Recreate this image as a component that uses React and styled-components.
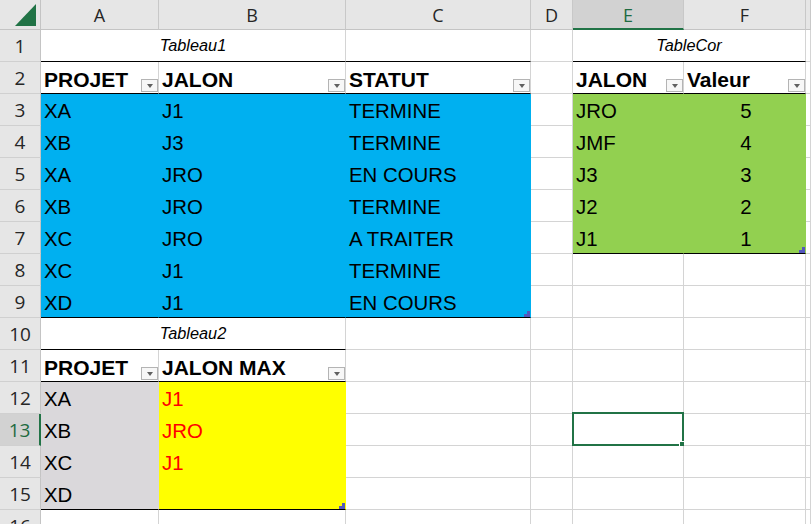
import React from 'react';
import styled, { createGlobalStyle } from 'styled-components';

const GlobalStyle = createGlobalStyle`
  html, body {
    margin: 0;
    padding: 0;
    background: #ffffff;
    overflow: hidden;
  }
`;

const BLUE = '#00b0f0';
const GREEN = '#92d050';
const YELLOW = '#ffff00';
const GRAY = '#dad8db';
const GRID = '#d4d4d4';
const XL_GREEN = '#217346';

const columns = ['A', 'B', 'C', 'D', 'E', 'F', ''];

const tableau1 = [
  ['XA', 'J1', 'TERMINE'],
  ['XB', 'J3', 'TERMINE'],
  ['XA', 'JRO', 'EN COURS'],
  ['XB', 'JRO', 'TERMINE'],
  ['XC', 'JRO', 'A TRAITER'],
  ['XC', 'J1', 'TERMINE'],
  ['XD', 'J1', 'EN COURS'],
];

const tableCor = [
  ['JRO', '5'],
  ['JMF', '4'],
  ['J3', '3'],
  ['J2', '2'],
  ['J1', '1'],
];

const tableau2 = [
  ['XA', 'J1'],
  ['XB', 'JRO'],
  ['XC', 'J1'],
  ['XD', ''],
];

const App = () => {
  return (
    <>
      <GlobalStyle />
      <Sheet>
        <Corner>
          <svg width="41" height="30" viewBox="0 0 41 30">
            <polygon points="36,4 36,26 15,26" fill={XL_GREEN} />
          </svg>
        </Corner>
        {columns.map((c, i) =>
          <ColHeader key={i} $selected={c === 'E'}>{c}</ColHeader>,
        )}

        {/* row 1 : titles */}
        <RowHeader>1</RowHeader>
        <Title $span={2} $line="#000">Tableau1</Title>
        <Cell $line="#000" />
        <Cell />
        <Title $span={2} $line="#000">TableCor</Title>
        <Cell />

        {/* row 2 : headers */}
        <RowHeader>2</RowHeader>
        <HeadCell label="PROJET" />
        <HeadCell label="JALON" />
        <HeadCell label="STATUT" />
        <Cell />
        <HeadCell label="JALON" />
        <HeadCell label="Valeur" />
        <Cell />

        {tableau1.map((row, i) => {
          const last = i === tableau1.length - 1;
          const cor = tableCor[i];
          const corLast = i === tableCor.length - 1;
          return (
            <React.Fragment key={i}>
              <RowHeader>{i + 3}</RowHeader>
              <Cell $fill={BLUE} $line={last ? '#000' : null}>{row[0]}</Cell>
              <Cell $fill={BLUE} $line={last ? '#000' : null}>{row[1]}</Cell>
              <Cell $fill={BLUE} $line={last ? '#000' : null}>
                {row[2]}
                {last && <ResizeMark />}
              </Cell>
              <Cell />
              {cor ? (
                <>
                  <Cell $fill={GREEN} $line={corLast ? '#000' : null}>{cor[0]}</Cell>
                  <Cell $fill={GREEN} $line={corLast ? '#000' : null} $align="center">
                    {cor[1]}
                    {corLast && <ResizeMark />}
                  </Cell>
                </>
              ) : (
                <>
                  <Cell />
                  <Cell />
                </>
              )}
              <Cell />
            </React.Fragment>
          );
        })}

        {/* row 10 */}
        <RowHeader>10</RowHeader>
        <Title $span={2} $line="#000">Tableau2</Title>
        <Cell />
        <Cell />
        <Cell />
        <Cell />
        <Cell />

        {/* row 11 */}
        <RowHeader>11</RowHeader>
        <HeadCell label="PROJET" />
        <HeadCell label="JALON MAX" />
        <Cell />
        <Cell />
        <Cell />
        <Cell />
        <Cell />

        {tableau2.map((row, i) => {
          const last = i === tableau2.length - 1;
          const n = i + 12;
          return (
            <React.Fragment key={i}>
              <RowHeader $selected={n === 13}>{n}</RowHeader>
              <Cell $fill={GRAY} $line={last ? '#000' : null}>{row[0]}</Cell>
              <Cell $fill={YELLOW} $line={last ? '#000' : null} $color="#ff0000">
                {row[1]}
                {last && <ResizeMark />}
              </Cell>
              <Cell />
              <Cell />
              <Cell>
                {n === 13 && (
                  <Selection>
                    <FillHandle />
                  </Selection>
                )}
              </Cell>
              <Cell />
              <Cell />
            </React.Fragment>
          );
        })}

        <RowHeader>16</RowHeader>
        {columns.map((c, i) => <Cell key={i} />)}
      </Sheet>
    </>
  );
};

const HeadCell = ({ label }) => (
  <Cell $bold $line="#000">
    {label}
    <DropButton />
  </Cell>
);

const ResizeMark = () => (
  <Mark width="6" height="6" viewBox="0 0 6 6">
    <path d="M3 0H6V6H0V3H3Z" fill="#5457bd" />
  </Mark>
);

const Sheet = styled.div`
  display: grid;
  grid-template-columns: 41px 118px 187px 185px 42px 111px 122px 1fr;
  grid-template-rows: 30px;
  grid-auto-rows: 32px;
  width: 811px;
  height: 524px;
  overflow: hidden;
  background: #ffffff;
`;

const Corner = styled.div`
  background: #e6e6e6;
  border-right: 1px solid #c4c4c4;
  border-bottom: 1px solid #c4c4c4;
  box-sizing: border-box;
  & > svg {
    display: block;
  }
`;

const ColHeader = styled.div`
  display: flex;
  align-items: center;
  justify-content: center;
  box-sizing: border-box;
  background: ${(p) => (p.$selected ? '#d2d2d2' : '#e6e6e6')};
  border-right: 1px solid #c8c8c8;
  border-bottom: ${(p) => (p.$selected ? `2px solid ${XL_GREEN}` : '1px solid #c4c4c4')};
  color: ${(p) => (p.$selected ? '#1e6b41' : '#262626')};
  font-family: "Open Sans", "Noto Sans", sans-serif;
  font-size: 18px;
  padding-top: ${(p) => (p.$selected ? '1px' : '0')};
`;

const RowHeader = styled.div`
  display: flex;
  align-items: center;
  justify-content: center;
  box-sizing: border-box;
  background: ${(p) => (p.$selected ? '#d2d2d2' : '#e6e6e6')};
  border-right: ${(p) => (p.$selected ? `2px solid ${XL_GREEN}` : '1px solid #c4c4c4')};
  border-bottom: 1px solid #d0d0d0;
  color: ${(p) => (p.$selected ? '#1e6b41' : '#262626')};
  font-family: "Open Sans", "Noto Sans", sans-serif;
  font-size: 19px;
`;

const Cell = styled.div`
  position: relative;
  display: flex;
  align-items: center;
  justify-content: ${(p) => (p.$align === 'center' ? 'center' : 'flex-start')};
  box-sizing: border-box;
  grid-column: span ${(p) => p.$span || 1};
  padding: 4px 0 0 3px;
  background: ${(p) => p.$fill || '#ffffff'};
  border-right: 1px solid ${(p) => p.$fill || GRID};
  border-bottom: 1px solid ${(p) => p.$line || p.$fill || GRID};
  color: ${(p) => p.$color || '#000000'};
  font-family: "Liberation Sans", Arial, sans-serif;
  font-size: ${(p) => (p.$bold ? '21px' : '20.4px')};
  font-weight: ${(p) => (p.$bold ? 700 : 400)};
  white-space: nowrap;
`;

const Title = styled(Cell)`
  justify-content: center;
  padding: 0;
  font-size: 16.3px;
  font-style: italic;
`;

const DropButton = styled.span`
  display: flex;
  align-items: center;
  justify-content: center;
  align-self: flex-end;
  margin: 0 0 1px auto;
  width: 17px;
  height: 13px;
  box-sizing: border-box;
  border: 1px solid #b4b4b4;
  background: #f7f7f7;
  &::after {
    content: '';
    border-left: 3.5px solid transparent;
    border-right: 3.5px solid transparent;
    border-top: 4px solid #606060;
    margin-top: 1px;
  }
`;

const Mark = styled.svg`
  position: absolute;
  right: 0;
  bottom: 0;
  display: block;
`;

const Selection = styled.div`
  position: absolute;
  top: -2px;
  left: -1px;
  right: -1px;
  bottom: -1px;
  border: 2px solid ${XL_GREEN};
  pointer-events: none;
`;

const FillHandle = styled.div`
  position: absolute;
  right: -5px;
  bottom: -5px;
  width: 6px;
  height: 6px;
  background: ${XL_GREEN};
  border: 1px solid #ffffff;
`;

export default App;
